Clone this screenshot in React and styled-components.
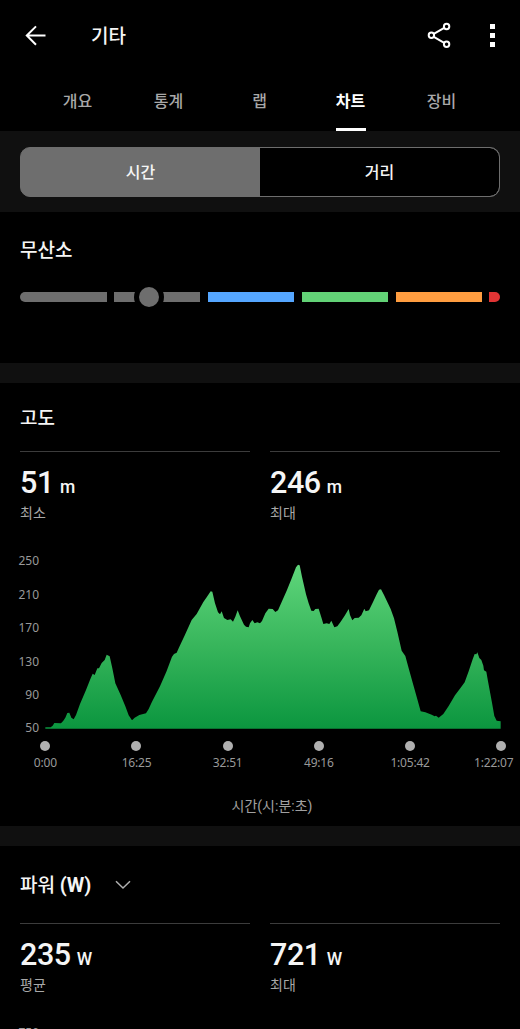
import React from 'react';
import styled, { createGlobalStyle } from 'styled-components';

const tabs = ['개요', '통계', '랩', '차트', '장비'];

const zones = [
  { color: '#6e6e6e', width: 86.5 },
  { color: '#6e6e6e', width: 86.5 },
  { color: '#55a6ff', width: 86.5 },
  { color: '#62d276', width: 86.5 },
  { color: '#ff9d40', width: 86.5 },
  { color: '#e03434', width: 10.5 },
];

const elevationTicks = [250, 210, 170, 130, 90, 50];
const timeTicks = ['0:00', '16:25', '32:51', '49:16', '1:05:42', '1:22:07'];

// x,y pairs, three units per pixel
const elevationPoints = [
  '136,562 152,562 158,557 163,549 183,550 190,542 196,533 202,519 208,518 214,533 221,538 228,525',
  '240,492 258,450 272,415 278,401 284,405 292,385 297,385 305,369 314,360 320,344 329,349 337,385',
  '346,430 362,465 376,499 386,526 396,541 404,533 418,525 438,520 446,507 456,485 480,439 500,393',
  '516,350 522,342 530,338 536,325 555,284 575,240 590,222 610,186 620,172 632,154 637,155 645,190',
  '654,217 660,223 665,214 672,234 682,240 692,238 699,245 706,230 713,211 720,229 732,254 738,260',
  '746,262 750,250 757,240 764,250 772,247 780,250 786,243 796,220 806,206 818,207 826,216 834,211',
  '846,184 860,152 874,118 888,82 894,74 899,76 906,110 918,163 926,190 934,212 941,213 946,207',
  '956,206 964,232 970,252 980,250 988,252 994,242 1003,262 1012,259 1022,245 1034,227 1046,207',
  '1050,225 1057,241 1064,234 1076,233 1084,226 1093,206 1097,214 1107,211 1118,188 1130,163',
  '1137,149 1143,148 1152,165 1162,186 1172,207 1182,235 1192,275 1205,332 1216,348 1226,385',
  '1240,435 1252,478 1262,514 1276,517 1295,524 1304,529 1308,527 1316,533 1330,522 1346,498',
  '1365,466 1382,443 1394,427 1406,394 1418,358 1424,342 1429,343 1432,337 1438,354 1444,360',
  '1450,377 1452,391 1459,395 1464,424 1476,488 1483,528 1490,542 1502,544 1502,566 136,566',
].join(' ');

const Stat = ({ value, unit, label }) => (
  <StatBox>
    <StatValue>
      {value}
      <Unit>{unit}</Unit>
    </StatValue>
    <StatLabel>{label}</StatLabel>
  </StatBox>
);

const App = () => {
  return (
    <Page>
      <GlobalStyle />
      <Header>
        <svg width="24" height="24" viewBox="0 0 24 24" fill="none" stroke="#fff" strokeWidth="2">
          <path d="M22.5 11.5H3.8M13 2.4L3.8 11.5L13 20.7" />
        </svg>
        <Title>기타</Title>
        <Actions>
          <svg width="26" height="28" viewBox="0 0 26 28" fill="none" stroke="#fff" strokeWidth="2">
            <circle cx="4.4" cy="13.3" r="2.7" />
            <circle cx="19.6" cy="4.5" r="2.7" />
            <circle cx="19.6" cy="22.2" r="2.7" />
            <path d="M6.8 11.9L17.2 5.9M6.8 14.8L17.2 20.8" />
          </svg>
          <More>
            <i />
            <i />
            <i />
          </More>
        </Actions>
      </Header>
      <TabBar>
        {tabs.map((tab) => (
          <Tab key={tab} $active={tab === '차트'}>
            {tab}
          </Tab>
        ))}
      </TabBar>

      <SegmentArea>
        <Segment>
          <SegmentButton $active>시간</SegmentButton>
          <SegmentButton>거리</SegmentButton>
        </Segment>
      </SegmentArea>

      <ZoneSection>
        <SectionTitle>무산소</SectionTitle>
        <ZoneBar>
          {zones.map((zone, i) => (
            <Zone key={i} $color={zone.color} $width={zone.width} />
          ))}
          <Knob />
        </ZoneBar>
      </ZoneSection>
      <Divider />

      <ElevationSection>
        <SectionTitle>고도</SectionTitle>
        <Stats>
          <Stat value="51" unit="m" label="최소" />
          <Stat value="246" unit="m" label="최대" />
        </Stats>
        <Chart>
          <YAxis>
            {elevationTicks.map((tick) => (
              <span key={tick}>{tick}</span>
            ))}
          </YAxis>
          <svg width="456" height="174" viewBox="135 45 1368 522">
            <defs>
              <linearGradient id="elevation" gradientUnits="userSpaceOnUse" x1="0" y1="74" x2="0" y2="566">
                <stop offset="0" stopColor="#5fd67b" />
                <stop offset="0.5" stopColor="#37b55b" />
                <stop offset="1" stopColor="#0b963f" />
              </linearGradient>
            </defs>
            <polygon points={elevationPoints} fill="url(#elevation)" />
          </svg>
        </Chart>
        <XAxis>
          {timeTicks.map((tick) => (
            <Tick key={tick}>
              <Dot />
              <span>{tick}</span>
            </Tick>
          ))}
        </XAxis>
        <AxisTitle>시간(시:분:초)</AxisTitle>
      </ElevationSection>
      <Divider />

      <PowerSection>
        <SectionTitle>
          <span>
            파워 <b>(W)</b>
          </span>
          <svg width="16" height="12" viewBox="0 0 16 12" fill="none" stroke="#b0b0b0" strokeWidth="1.5">
            <path d="M1 1.2L8 8L15 1.2" />
          </svg>
        </SectionTitle>
        <Stats $top={23}>
          <Stat value="235" unit="W" label="평균" />
          <Stat value="721" unit="W" label="최대" />
        </Stats>
        <Chart>
          <YAxis>
            <span>750</span>
          </YAxis>
        </Chart>
      </PowerSection>
    </Page>
  );
};

export default App;

const GlobalStyle = createGlobalStyle`
  * {
    box-sizing: border-box;
  }
  body {
    margin: 0;
    background: #000;
  }
`;

const Page = styled.div`
  display: flex;
  flex-direction: column;
  width: 520px;
  height: 1029px;
  overflow: hidden;
  background: #000;
  color: #f5f5f5;
  font-family: Roboto, 'Noto Sans CJK KR', sans-serif;

  > * {
    flex-shrink: 0;
  }
  svg {
    display: block;
    flex-shrink: 0;
  }
`;

const Header = styled.header`
  display: flex;
  align-items: center;
  height: 71px;
  padding: 0 25px 0 23px;
`;

const Title = styled.h1`
  margin: 3px 0 0 44px;
  font-size: 19px;
  font-weight: 500;
  line-height: 28px;
`;

const Actions = styled.div`
  display: flex;
  align-items: center;
  gap: 37px;
  margin-left: auto;
`;

const More = styled.div`
  display: flex;
  flex-direction: column;
  gap: 4px;
  i {
    width: 5px;
    height: 5px;
    background: #fff;
  }
`;

const TabBar = styled.nav`
  display: flex;
  height: 60px;
  padding-left: 32px;
`;

const Tab = styled.div`
  display: flex;
  flex-direction: column;
  align-items: center;
  width: 91px;
  padding-top: 19px;
  font-size: 16px;
  line-height: 24px;
  font-weight: ${({ $active }) => ($active ? 700 : 500)};
  color: ${({ $active }) => ($active ? '#fff' : '#a8a8a8')};
  &::after {
    content: '';
    width: 30px;
    height: 3px;
    margin-top: 14px;
    background: ${({ $active }) => ($active ? '#fff' : 'transparent')};
  }
`;

const SegmentArea = styled.div`
  height: 81px;
  padding: 16px 20px 0;
  background: #101010;
`;

const Segment = styled.div`
  display: flex;
  height: 50px;
  border: 1px solid #6e6e6e;
  border-radius: 10px;
  overflow: hidden;
  background: #6e6e6e;
`;

const SegmentButton = styled.div`
  flex: 1;
  display: flex;
  align-items: center;
  justify-content: center;
  padding-bottom: 2px;
  border-radius: ${({ $active }) => ($active ? 0 : '0 9px 9px 0')};
  background: ${({ $active }) => ($active ? '#6e6e6e' : '#000')};
  font-size: 16px;
  font-weight: 500;
`;

const SectionTitle = styled.h2`
  display: flex;
  align-items: center;
  gap: 24px;
  margin: 0;
  font-size: 19px;
  font-weight: 500;
  line-height: 28px;
  b {
    font-size: 20px;
    line-height: 20px;
  }
`;

const ZoneSection = styled.section`
  height: 151px;
  padding: 25px 20px 0;
`;

const ZoneBar = styled.div`
  position: relative;
  display: flex;
  justify-content: space-between;
  height: 10px;
  margin-top: 27px;
`;

const Zone = styled.div`
  width: ${({ $width }) => $width}px;
  background: ${({ $color }) => $color};
  &:first-child {
    border-radius: 5px 0 0 5px;
  }
  &:nth-child(6) {
    border-radius: 0 5px 5px 0;
  }
`;

const Knob = styled.div`
  position: absolute;
  left: 118.5px;
  top: -5px;
  width: 20px;
  height: 20px;
  border-radius: 50%;
  background: #6e6e6e;
  box-shadow: 0 0 0 5px #000;
`;

const Divider = styled.div`
  height: 20px;
  background: #101010;
`;

const ElevationSection = styled.section`
  height: 443px;
  padding: 22px 0 0 20px;
`;

const PowerSection = styled.section`
  height: 183px;
  padding: 26px 0 0 20px;
  overflow: hidden;
`;

const Stats = styled.div`
  display: flex;
  gap: 20px;
  margin-top: ${({ $top = 18 }) => $top}px;
`;

const StatBox = styled.div`
  width: 230px;
  height: 88px;
  padding-top: 13px;
  border-top: 1px solid #3c3c3c;
`;

const StatValue = styled.div`
  font-size: 30.5px;
  font-weight: 500;
  line-height: 36px;
  letter-spacing: -0.4px;
`;

const Unit = styled.span`
  margin-left: 6px;
  font-size: 17.5px;
  font-weight: 500;
`;

const StatLabel = styled.div`
  margin-top: -2px;
  font-size: 14px;
  line-height: 20px;
  color: #a8a8a8;
`;

const Chart = styled.div`
  display: flex;
  height: 174px;
  margin-top: 16px;
`;

const YAxis = styled.div`
  display: flex;
  flex-direction: column;
  gap: 15.4px;
  width: 19px;
  margin: -2.6px 6px 0 0;
  align-items: flex-end;
  font-family: 'Noto Sans', sans-serif;
  font-size: 12px;
  line-height: 18px;
  color: #999;
  span {
    white-space: nowrap;
  }
`;

const XAxis = styled.div`
  display: flex;
  justify-content: space-between;
  width: 466px;
  margin: 12px 0 0 20.3px;
`;

const Tick = styled.div`
  display: flex;
  flex-direction: column;
  align-items: center;
  width: 10px;
  font-family: 'Noto Sans', sans-serif;
  font-size: 12px;
  line-height: 18px;
  letter-spacing: -0.2px;
  color: #999;
  span {
    margin-top: 3px;
    white-space: nowrap;
  }
  &:last-child span {
    margin-right: 15px;
  }
`;

const Dot = styled.div`
  width: 10px;
  height: 10px;
  border-radius: 50%;
  background: #b0b0b0;
`;

const AxisTitle = styled.div`
  margin-top: 24px;
  padding-left: 4px;
  text-align: center;
  font-size: 14px;
  line-height: 20px;
  color: #a0a0a0;
`;
